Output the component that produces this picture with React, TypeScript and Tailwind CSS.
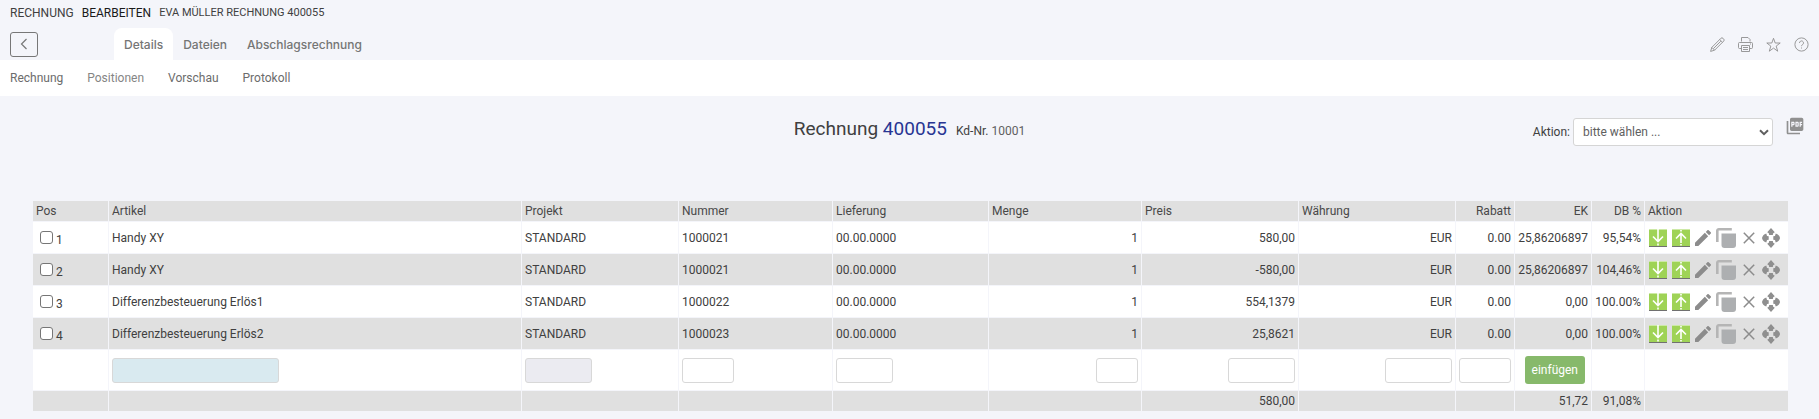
import React from 'react'
import { MdPictureAsPdf, MdEdit } from 'react-icons/md'
import { twMerge } from 'tailwind-merge'

interface Position {
  pos: number
  artikel: string
  nummer: string
  preis: string
  ek: string
  db: string
}

const positions: Position[] = [
  { pos: 1, artikel: 'Handy XY', nummer: '1000021', preis: '580,00', ek: '25,86206897', db: '95,54%' },
  { pos: 2, artikel: 'Handy XY', nummer: '1000021', preis: '-580,00', ek: '25,86206897', db: '104,46%' },
  { pos: 3, artikel: 'Differenzbesteuerung Erlös1', nummer: '1000022', preis: '554,1379', ek: '0,00', db: '100.00%' },
  { pos: 4, artikel: 'Differenzbesteuerung Erlös2', nummer: '1000023', preis: '25,8621', ek: '0,00', db: '100.00%' },
]

const columns = [
  { label: 'Pos', width: 'w-[75px]' },
  { label: 'Artikel', width: 'w-auto' },
  { label: 'Projekt', width: 'w-[156px]' },
  { label: 'Nummer', width: 'w-[153px]' },
  { label: 'Lieferung', width: 'w-[155px]' },
  { label: 'Menge', width: 'w-[152px]' },
  { label: 'Preis', width: 'w-[156px]' },
  { label: 'Währung', width: 'w-[156px]' },
  { label: 'Rabatt', width: 'w-[58px]', right: true },
  { label: 'EK', width: 'w-[76px]', right: true },
  { label: 'DB %', width: 'w-[52px]', right: true },
  { label: 'Aktion', width: 'w-[143px]' },
]

const InsertIcon: React.FC<{ up?: boolean }> = ({ up }) => (
  <svg width="18" height="18" viewBox="0 0 18 18">
    <rect width="18" height="17" fill="#9fd356" />
    <path d="M0 .5h18" stroke="#cde9a6" />
    <path d="M0 17.5h18" stroke="#707070" />
    {up ? (
      <path d="M9 14V4.500M4 9.500 9 4.500l5 5M9 15v1.500M9 1v1.500" fill="none" stroke="#fff" strokeWidth="1.6" />
    ) : (
      <path d="M9 0v12.500M4 7.500l5 5 5-5M9 14.500V16.500" fill="none" stroke="#fff" strokeWidth="1.6" />
    )}
  </svg>
)

const CopyIcon = () => (
  <svg width="20" height="20" viewBox="0 0 20 20">
    <path d="M1.300 14V2.800a1.500 1.500 0 0 1 1.500-1.500h13" fill="none" stroke="#b5b5b5" strokeWidth="2.600" />
    <path d="M5.500 5.500H20V17a3 3 0 0 1-3 3H8.500a3 3 0 0 1-3-3z" fill="#adafb1" />
  </svg>
)

const DeleteIcon = () => (
  <svg width="12" height="12" viewBox="0 0 12 12">
    <path d="m.8.8 10.4 10.4M11.2.8.8 11.2" stroke="#8c8c8c" strokeWidth="1.5" />
  </svg>
)

const MoveIcon = () => (
  <svg width="18" height="20" viewBox="0 0 18 20" fill="#8f8f8f">
    <path d="m9 0 3.800 4.200-1.600 1.100L10.800 7H7.200l-.4-1.700-1.600-1.100z" />
    <path d="m9 20 3.800-4.200-1.600-1.100-.4-1.700H7.200l-.4 1.700-1.600 1.100z" />
    <path d="M0 10c.4-2 1.700-3.800 4.300-4.600L5 8l1.700.3v3.400L5 12l-.7 2.600C1.700 13.800.4 12 0 10z" />
    <path d="M18 10c-.4-2-1.700-3.800-4.300-4.600L13 8l-1.700.3v3.400l1.700.3.7 2.600c2.600-.8 3.900-2.600 4.300-4.600z" />
  </svg>
)

const headerIcons = [
  {
    label: 'Bearbeiten',
    path: 'M.6 14.400 1.800 10.400 10.900 1.300a1.500 1.500 0 0 1 2.100 0l.7.7a1.500 1.500 0 0 1 0 2.100L4.600 13.200zM1.800 10.400l2.800 2.800M9.700 2.500l2.800 2.800M3.400 11.600l7.400-7.400',
  },
  {
    label: 'Drucken',
    path: 'M3.500 4.500v-4h6.500l2 2v2M3.500 11.500h-2a1 1 0 0 1-1-1v-4a1 1 0 0 1 1-1h12a1 1 0 0 1 1 1v4a1 1 0 0 1-1 1h-1.500M3.500 8.500h8v6h-8zM5 10.500h5M5 12.500h5M12 7h1',
  },
  {
    label: 'Favorit',
    path: 'm7.500 1.300 1.700 4.700h5l-4 3.100 1.500 5.100-4.200-3.100-4.200 3.100 1.500-5.100-4-3.100h5z',
  },
  {
    label: 'Hilfe',
    path: 'M7.500.9a6.600 6.600 0 1 1 0 13.200a6.600 6.600 0 1 1 0-13.200M5.500 6a2 2 0 1 1 3.100 1.600c-.8.5-1.100.8-1.100 1.600M7.500 10.500v1',
  },
]

const Cell: React.FC<{ className?: string; children?: React.ReactNode }> = ({ className, children }) => (
  <td className={twMerge('px-[3px] bg-white group-even:bg-[#e0e0e0]', className)}>{children}</td>
)

const TextInput: React.FC<{ label: string; className?: string }> = ({ label, className }) => (
  <input
    type="text"
    aria-label={label}
    className={twMerge('inline-block h-[25px] rounded-[3px] border border-[#d8d8d8] bg-white px-1 align-middle', className)}
  />
)

const App: React.FC = () => {
  return (
    <div className="min-h-screen bg-[#f4f5fa] font-[Roboto,sans-serif] text-xs text-[#404040]">
      <header>
        <div className="flex h-7 items-center gap-2 px-[10px] pb-[2px]">
          <span>RECHNUNG</span>
          <span className="text-[#1a1a1a]">BEARBEITEN</span>
          <span className="text-[11px]">EVA MÜLLER RECHNUNG 400055</span>
        </div>
        <div className="flex h-8 items-center px-[10px]">
          <button
            type="button"
            aria-label="Zurück"
            className="flex h-[25px] w-7 items-center justify-center rounded-[3px] border border-[#777]"
          >
            <svg width="8" height="12" viewBox="0 0 8 12">
              <path d="M6.500 1 1.500 6l5 5" fill="none" stroke="#777" strokeWidth="1.200" />
            </svg>
          </button>
          <nav className="ml-[76px] flex h-full font-[Inter,sans-serif] text-xs font-medium text-[#757575]">
            <a href="#details" className="flex items-center rounded-t-lg bg-white px-[10px] pt-[2px]">Details</a>
            <a href="#dateien" className="flex items-center px-[10px] pt-[2px]">Dateien</a>
            <a href="#abschlag" className="flex items-center px-[10px] pt-[2px]">Abschlagsrechnung</a>
          </nav>
          <div className="ml-auto flex gap-[13px]">
            {headerIcons.map(({ label, path }) => (
              <button key={label} type="button" aria-label={label}>
                <svg width="15" height="15" viewBox="0 0 15 15" fill="none" stroke="#8e8e8e" strokeWidth="0.900">
                  <path d={path} />
                </svg>
              </button>
            ))}
          </div>
        </div>
      </header>

      <nav className="flex h-9 items-center gap-6 bg-white px-[10px] text-[#6c6c6c]">
        <a href="#rechnung">Rechnung</a>
        <a href="#positionen" className="text-[#858585]">Positionen</a>
        <a href="#vorschau">Vorschau</a>
        <a href="#protokoll">Protokoll</a>
      </nav>

      <main>
        <div className="grid h-[104px] grid-cols-[1fr_auto_1fr] items-start pt-5">
          <h1 className="col-start-2 flex items-baseline gap-[9px] text-[19px] leading-[26px]">
            <span>
              Rechnung <span className="text-[#283593]">400055</span>
            </span>
            <span className="text-xs">
              Kd-Nr. <span className="text-[#606060]">10001</span>
            </span>
          </h1>
          <div className="flex justify-end pr-[14px]">
            <label htmlFor="aktion" className="mr-[3px] leading-8">Aktion:</label>
            <div className="relative mt-[2px]">
              <select
                id="aktion"
                className="h-7 w-[200px] appearance-none rounded-[3px] border border-[#d5d5d5] bg-white pl-[9px] text-[#606060]"
              >
                <option>bitte wählen ...</option>
              </select>
              <svg className="pointer-events-none absolute top-[11px] right-1" width="10" height="7" viewBox="0 0 10 7">
                <path d="m1 1.200 4 4 4-4" fill="none" stroke="#5f5f5f" strokeWidth="2" />
              </svg>
            </div>
            <button type="button" aria-label="PDF" className="ml-3 self-start">
              <MdPictureAsPdf className="size-5 text-[#909090]" />
            </button>
          </div>
        </div>

        <div className="pr-[30px] pl-8">
          <table className="w-full table-fixed border-separate border-spacing-px">
            <thead>
              <tr className="h-5">
                {columns.map(({ label, width, right }) => (
                  <th
                    key={label}
                    className={twMerge('bg-[#e0e0e0] px-[3px] text-left font-normal text-[#484848]', width, right && 'text-right')}
                  >
                    {label}
                  </th>
                ))}
              </tr>
            </thead>
            <tbody>
              {positions.map((p) => (
                <tr key={p.pos} className="group h-[31px]">
                  <Cell>
                    <label className="flex items-center gap-[3px] pl-1">
                      <input
                        type="checkbox"
                        className="size-[13px] appearance-none rounded-[3px] border border-[#767676] bg-white"
                      />
                      <span className="pt-1">{p.pos}</span>
                    </label>
                  </Cell>
                  <Cell>{p.artikel}</Cell>
                  <Cell>STANDARD</Cell>
                  <Cell>{p.nummer}</Cell>
                  <Cell>00.00.0000</Cell>
                  <Cell className="text-right">1</Cell>
                  <Cell className="text-right">{p.preis}</Cell>
                  <Cell className="text-right">EUR</Cell>
                  <Cell className="text-right">0.00</Cell>
                  <Cell className="text-right">{p.ek}</Cell>
                  <Cell className="text-right">{p.db}</Cell>
                  <Cell>
                    <div className="flex items-center gap-[5px] pl-px">
                      <button type="button" aria-label="Darunter einfügen"><InsertIcon /></button>
                      <button type="button" aria-label="Darüber einfügen"><InsertIcon up /></button>
                      <button type="button" aria-label="Bearbeiten">
                        <MdEdit viewBox="3 3 18 18" className="size-4 text-[#8c8c8c]" />
                      </button>
                      <button type="button" aria-label="Kopieren"><CopyIcon /></button>
                      <button type="button" aria-label="Löschen" className="px-[2px]"><DeleteIcon /></button>
                      <button type="button" aria-label="Verschieben"><MoveIcon /></button>
                    </div>
                  </Cell>
                </tr>
              ))}
              <tr className="group h-10">
                <Cell />
                <Cell><TextInput label="Artikel" className="w-[167px] bg-[#d9eaf0]" /></Cell>
                <Cell><TextInput label="Projekt" className="w-[67px] bg-[#ebebf1]" /></Cell>
                <Cell><TextInput label="Nummer" className="w-[52px]" /></Cell>
                <Cell><TextInput label="Lieferung" className="w-[57px]" /></Cell>
                <Cell className="text-right"><TextInput label="Menge" className="w-[42px]" /></Cell>
                <Cell className="text-right"><TextInput label="Preis" className="w-[67px]" /></Cell>
                <Cell className="text-right"><TextInput label="Währung" className="w-[67px]" /></Cell>
                <Cell className="text-right"><TextInput label="Rabatt" className="w-[52px]" /></Cell>
                <Cell className="text-right">
                  <button type="button" className="mx-[3px] h-7 rounded-[3px] bg-[#87b96b] px-[7px] align-middle text-white">
                    einfügen
                  </button>
                </Cell>
                <Cell />
                <Cell />
              </tr>
              <tr className="group h-5">
                {columns.map(({ label }) => (
                  <Cell key={label} className="text-right">
                    {label === 'Preis' && '580,00'}
                    {label === 'EK' && '51,72'}
                    {label === 'DB %' && '91,08%'}
                  </Cell>
                ))}
              </tr>
            </tbody>
          </table>
        </div>
      </main>
    </div>
  )
}

export default App
